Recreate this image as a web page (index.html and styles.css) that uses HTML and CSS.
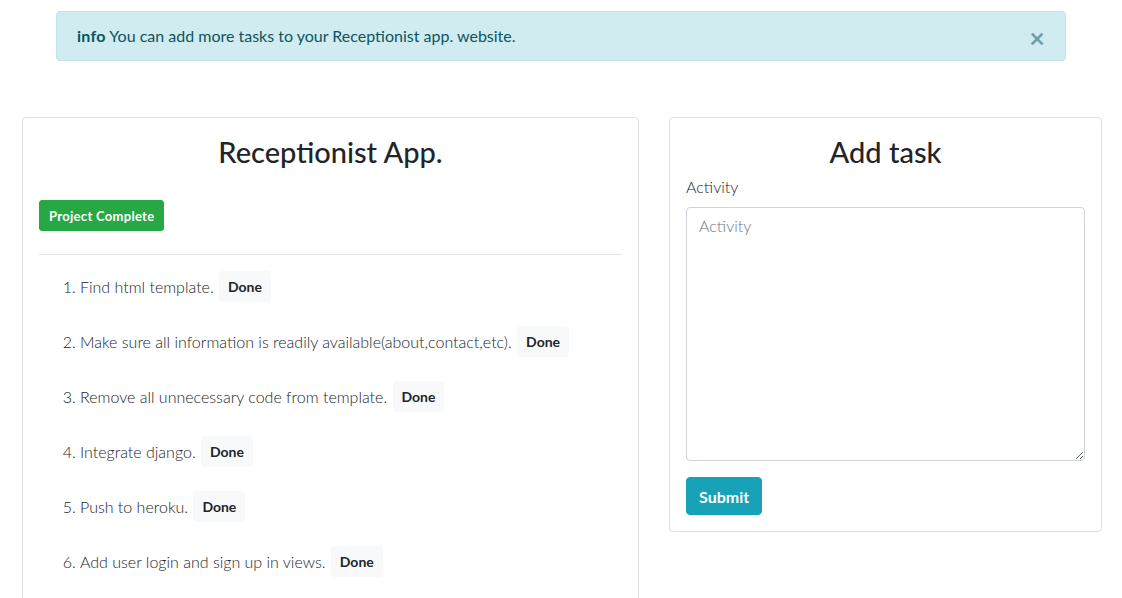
FILE: index.html
```html
<!DOCTYPE html>
<html>
<head>
<meta charset="utf-8">
<link rel="stylesheet" href="styles.css">
</head>
<body>
<div class="alert">
  <span><strong>info</strong> You can add more tasks to your Receptionist app. website.</span>
  <span class="close">&times;</span>
</div>
<div class="row">
  <div class="card left">
    <h2 class="title">Receptionist App.</h2>
    <div><button class="btn-success">Project Complete</button></div>
    <hr>
    <ol class="tasks">
      <li>Find html template. <button class="btn-done">Done</button></li>
      <li>Make sure all information is readily available(about,contact,etc). <button class="btn-done">Done</button></li>
      <li>Remove all unnecessary code from template. <button class="btn-done">Done</button></li>
      <li>Integrate django. <button class="btn-done">Done</button></li>
      <li>Push to heroku. <button class="btn-done">Done</button></li>
      <li>Add user login and sign up in views. <button class="btn-done">Done</button></li>
    </ol>
  </div>
  <div class="card right">
    <h2 class="title">Add task</h2>
    <label class="label">Activity</label>
    <textarea class="input" placeholder="Activity"></textarea>
    <div><button class="btn-info">Submit</button></div>
  </div>
</div>
</body>
</html>
```
FILE: styles.css
```css
* { box-sizing: border-box; }
html, body { margin: 0; padding: 0; }
body {
  font-family: Lato, "Open Sans", sans-serif;
  font-size: 16px;
  line-height: 1.5;
  color: #212529;
  background: #fff;
  overflow: hidden;
  height: 598px;
}
.alert {
  margin: 11px 56px 0 56px;
  height: 50px;
  padding: 12px 20px;
  background: #d1ecf1;
  border: 1px solid #bee5eb;
  border-radius: 4px;
  color: #0c5460;
  display: flex;
  justify-content: space-between;
  align-items: center;
  font-size: 16px;
}
.alert strong { font-weight: 700; letter-spacing: 0.3px; }
.close {
  font-size: 27px;
  font-weight: 700;
  color: #0c5460;
  opacity: 0.5;
  margin-right: 0;
  line-height: 1;
  margin-top: 3px;
}
.row {
  display: grid;
  grid-template-columns: 617px 433px;
  column-gap: 30px;
  padding: 0 21px 0 22px;
  margin-top: 56px;
  align-items: start;
}
.card {
  border: 1px solid #dfdfdf;
  border-radius: 4px;
  padding: 16px;
  background: #fff;
}
.left { min-height: 560px; }
.title {
  margin: 0;
  text-align: center;
  font-size: 29px;
  font-weight: 500;
  line-height: 36px;
}
.btn-success {
  margin-top: 30px;
  background: #28a745;
  color: #fff;
  border: 1px solid #28a745;
  border-radius: 3px;
  font-family: inherit;
  font-weight: 700;
  font-size: 13px;
  letter-spacing: 0.3px;
  height: 31px;
  padding: 0 9px;
}
hr {
  margin: 23px 0 0 0;
  border: 0;
  border-top: 1px solid #e3e3e3;
}
.tasks {
  margin: 16px 0 0 0;
  padding-left: 41px;
}
.tasks li {
  height: 31px;
  line-height: 31px;
  margin-bottom: 24px;
  font-weight: 300;
  color: #212529;
}
.btn-done {
  background: #f8f9fa;
  border: 1px solid #f8f9fa;
  border-radius: 3px;
  color: #212529;
  font-family: inherit;
  font-weight: 700;
  font-size: 14px;
  height: 31px;
  padding: 0 8px;
  vertical-align: top;
  margin-left: 1px;
}
.label {
  display: block;
  margin-top: 5px;
  line-height: 24px;
  font-weight: 300;
}
.input {
  display: block;
  width: 100%;
  height: 254px;
  margin-top: 8px;
  border: 1px solid #ced4da;
  border-radius: 4px;
  padding: 6px 12px;
  font-family: inherit;
  font-size: 16px;
  font-weight: 300;
  color: #495057;
  line-height: 24px;
  resize: vertical;
}
.input::placeholder { color: #6c757d; }
.btn-info {
  margin-top: 16px;
  background: #17a2b8;
  color: #fff;
  border: 1px solid #17a2b8;
  border-radius: 4px;
  font-family: inherit;
  font-size: 16px;
  font-weight: 700;
  height: 38px;
  padding: 0 12px;
}
```
